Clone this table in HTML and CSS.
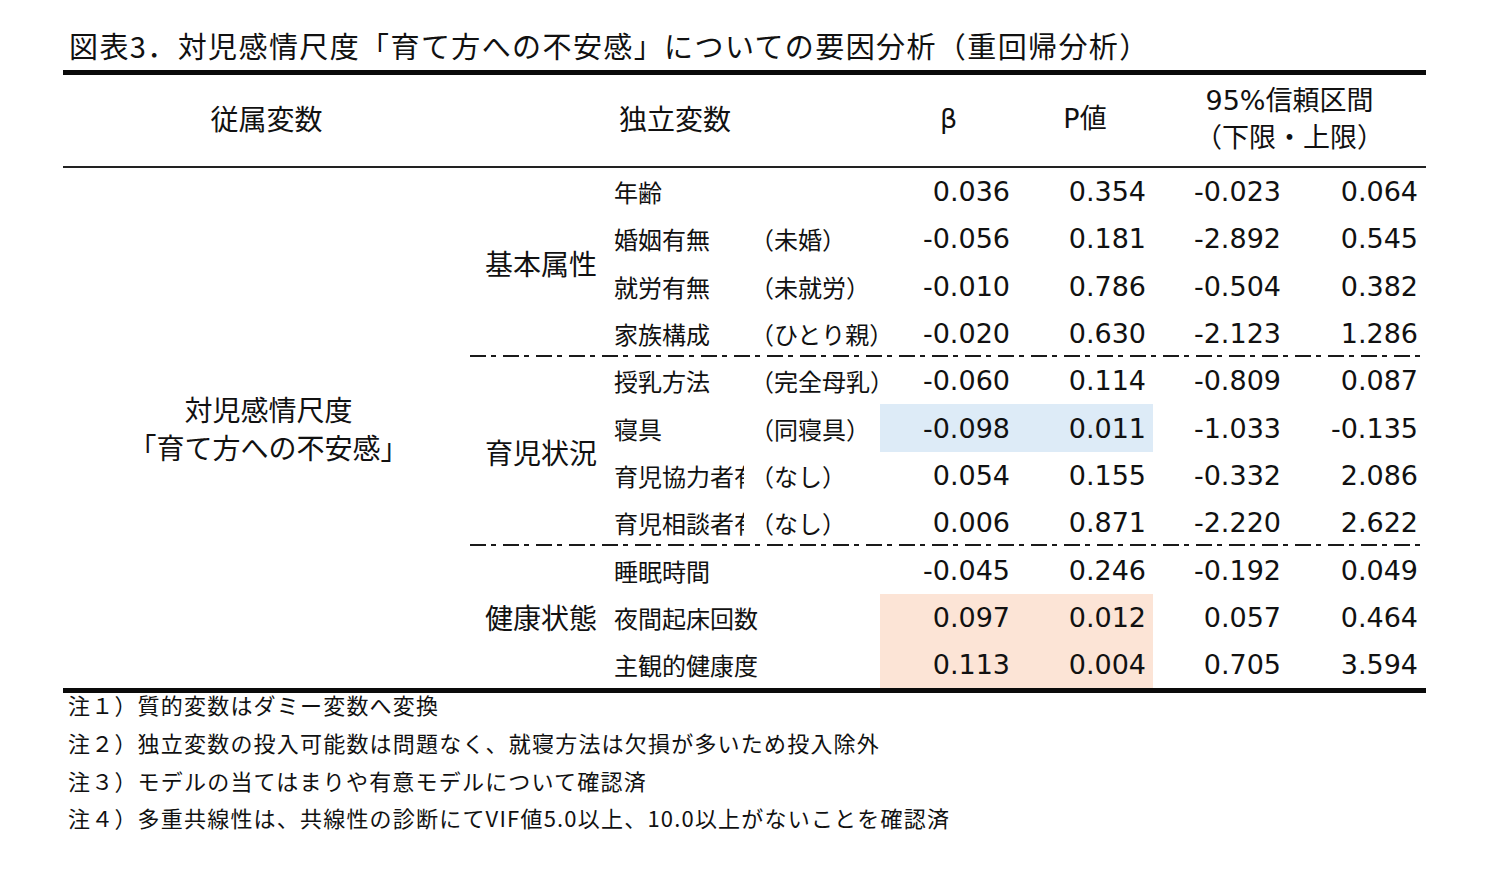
FILE: index.html
```html
<!DOCTYPE html>
<html lang="ja">
<head>
<meta charset="utf-8">
<link rel="stylesheet" href="styles.css">
</head>
<body>
<div class="page">
  <h1 class="title">図表3．対児感情尺度「育て方への不安感」についての要因分析（重回帰分析）</h1>
  <div class="table">
    <div class="thead">
      <div class="h dep">従属変数</div>
      <div class="h ind">独立変数</div>
      <div class="h beta">β</div>
      <div class="h pv">P値</div>
      <div class="h ci">95%信頼区間<br>（下限・上限）</div>
    </div>
    <div class="tbody">
      <div class="depcell">対児感情尺度<br>「育て方への不安感」</div>
      <div class="groups">
        <div class="group dash">
          <div class="glabel">基本属性</div>
          <div class="rows">
            <div class="row"><div class="name"><span>年齢</span></div><div class="cat"></div><div class="num">0.036</div><div class="num">0.354</div><div class="num lo">-0.023</div><div class="num">0.064</div></div>
            <div class="row"><div class="name"><span>婚姻有無</span></div><div class="cat">（未婚）</div><div class="num">-0.056</div><div class="num">0.181</div><div class="num lo">-2.892</div><div class="num">0.545</div></div>
            <div class="row"><div class="name"><span>就労有無</span></div><div class="cat">（未就労）</div><div class="num">-0.010</div><div class="num">0.786</div><div class="num lo">-0.504</div><div class="num">0.382</div></div>
            <div class="row"><div class="name"><span>家族構成</span></div><div class="cat">（ひとり親）</div><div class="num">-0.020</div><div class="num">0.630</div><div class="num lo">-2.123</div><div class="num">1.286</div></div>
          </div>
        </div>
        <div class="group dash">
          <div class="glabel">育児状況</div>
          <div class="rows">
            <div class="row"><div class="name"><span>授乳方法</span></div><div class="cat">（完全母乳）</div><div class="num">-0.060</div><div class="num">0.114</div><div class="num lo">-0.809</div><div class="num">0.087</div></div>
            <div class="row"><div class="name"><span>寝具</span></div><div class="cat">（同寝具）</div><div class="num hl-blue">-0.098</div><div class="num hl-blue">0.011</div><div class="num lo">-1.033</div><div class="num">-0.135</div></div>
            <div class="row"><div class="name"><span class="clip">育児協力者有無</span></div><div class="cat">（なし）</div><div class="num">0.054</div><div class="num">0.155</div><div class="num lo">-0.332</div><div class="num">2.086</div></div>
            <div class="row"><div class="name"><span class="clip">育児相談者有無</span></div><div class="cat">（なし）</div><div class="num">0.006</div><div class="num">0.871</div><div class="num lo">-2.220</div><div class="num">2.622</div></div>
          </div>
        </div>
        <div class="group">
          <div class="glabel">健康状態</div>
          <div class="rows">
            <div class="row"><div class="name"><span>睡眠時間</span></div><div class="cat"></div><div class="num">-0.045</div><div class="num">0.246</div><div class="num lo">-0.192</div><div class="num">0.049</div></div>
            <div class="row"><div class="name"><span>夜間起床回数</span></div><div class="cat"></div><div class="num hl-orange">0.097</div><div class="num hl-orange">0.012</div><div class="num lo">0.057</div><div class="num">0.464</div></div>
            <div class="row"><div class="name"><span>主観的健康度</span></div><div class="cat"></div><div class="num hl-orange">0.113</div><div class="num hl-orange">0.004</div><div class="num lo">0.705</div><div class="num">3.594</div></div>
          </div>
        </div>
      </div>
    </div>
  </div>
  <div class="notes">
    <p>注１）質的変数はダミー変数へ変換</p>
    <p>注２）独立変数の投入可能数は問題なく、就寝方法は欠損が多いため投入除外</p>
    <p>注３）モデルの当てはまりや有意モデルについて確認済</p>
    <p>注４）多重共線性は、共線性の診断にてVIF値5.0以上、10.0以上がないことを確認済</p>
  </div>
</div>
</body>
</html>
```

FILE: styles.css
```css
* { box-sizing: border-box; }
html, body { margin: 0; padding: 0; background: #fff; }
body {
  font-family: "Noto Sans CJK JP", "Noto Sans", sans-serif;
  color: #111;
}
.page {
  margin-left: 63px;
  width: 1363px;
  padding-top: 25px;
}
.title {
  margin: 0 0 5px 0;
  padding-left: 6px;
  font-size: 29px;
  font-weight: 400;
  line-height: 40px;
  height: 40px;
  white-space: nowrap;
  letter-spacing: 1.4px;
}
.table {
  border-top: 5px solid #0a0a0a;
  border-bottom: 5px solid #0a0a0a;
}
.thead {
  display: flex;
  height: 93px;
  border-bottom: 2px solid #222;
  font-size: 28px;
}
.h {
  display: flex;
  align-items: center;
  justify-content: center;
  text-align: center;
  line-height: 37px;
}
.dep { width: 407px; padding-bottom: 4px; }
.ind { width: 410px; padding-bottom: 4px; }
.beta { width: 137px; padding-bottom: 4px; font-family: "DejaVu Sans", "Noto Sans CJK JP", sans-serif; font-size: 27px; }
.pv { width: 136px; padding-bottom: 4px; font-family: "DejaVu Sans", "Noto Sans CJK JP", sans-serif; font-size: 27px; }
.ci { width: 273px; font-family: "DejaVu Sans", "Noto Sans CJK JP", sans-serif; font-size: 27px; padding-bottom: 4px; }

.tbody {
  display: flex;
}
.depcell {
  width: 407px;
  display: flex;
  align-items: center;
  justify-content: center;
  text-align: center;
  font-size: 28px;
  line-height: 38px;
  padding-left: 4px;
}
.groups {
  width: 956px;
  display: flex;
  flex-direction: column;
}
.group {
  display: flex;
}
.group.dash {
  background-image: linear-gradient(to right, #1a1a1a 0 16px, transparent 16px 21px, #1a1a1a 21px 26px, transparent 26px 33px);
  background-size: 33px 2px;
  background-position: left bottom;
  background-repeat: repeat-x;
}
.glabel {
  width: 142px;
  display: flex;
  align-items: center;
  justify-content: center;
  font-size: 28px;
}
.rows {
  width: 814px;
  display: flex;
  flex-direction: column;
}
.row {
  display: flex;
  height: 47.3px;
  align-items: stretch;
}
.name {
  width: 150px;
  display: flex;
  align-items: center;
  padding-left: 2px;
  font-size: 24px;
}
.name span {
  display: block;
  white-space: nowrap;
}
.name span.clip {
  width: 130px;
  overflow: hidden;
}
.cat {
  width: 118px;
  display: flex;
  align-items: center;
  font-size: 24px;
  white-space: nowrap;
  margin-left: -12px;
  padding-left: 0;
}
.cat + .num { margin-left: 12px; }
.num {
  width: 136px;
  display: flex;
  align-items: center;
  justify-content: flex-end;
  padding-right: 7px;
  font-family: "DejaVu Sans", sans-serif;
  font-size: 27px;
}
.row .num:nth-child(3) { width: 137px; }
.row .num:nth-child(6) { width: 137px; padding-right: 8px; }
.num.lo { padding-right: 8px; }
.hl-blue { background: #ddebf7; }
.hl-orange { background: #fce4d6; }

.notes {
  margin-top: -7px;
  padding-left: 5px;
}
.notes p {
  margin: 0;
  font-size: 22px;
  line-height: 37.7px;
  white-space: nowrap;
  letter-spacing: 1.2px;
}
```
